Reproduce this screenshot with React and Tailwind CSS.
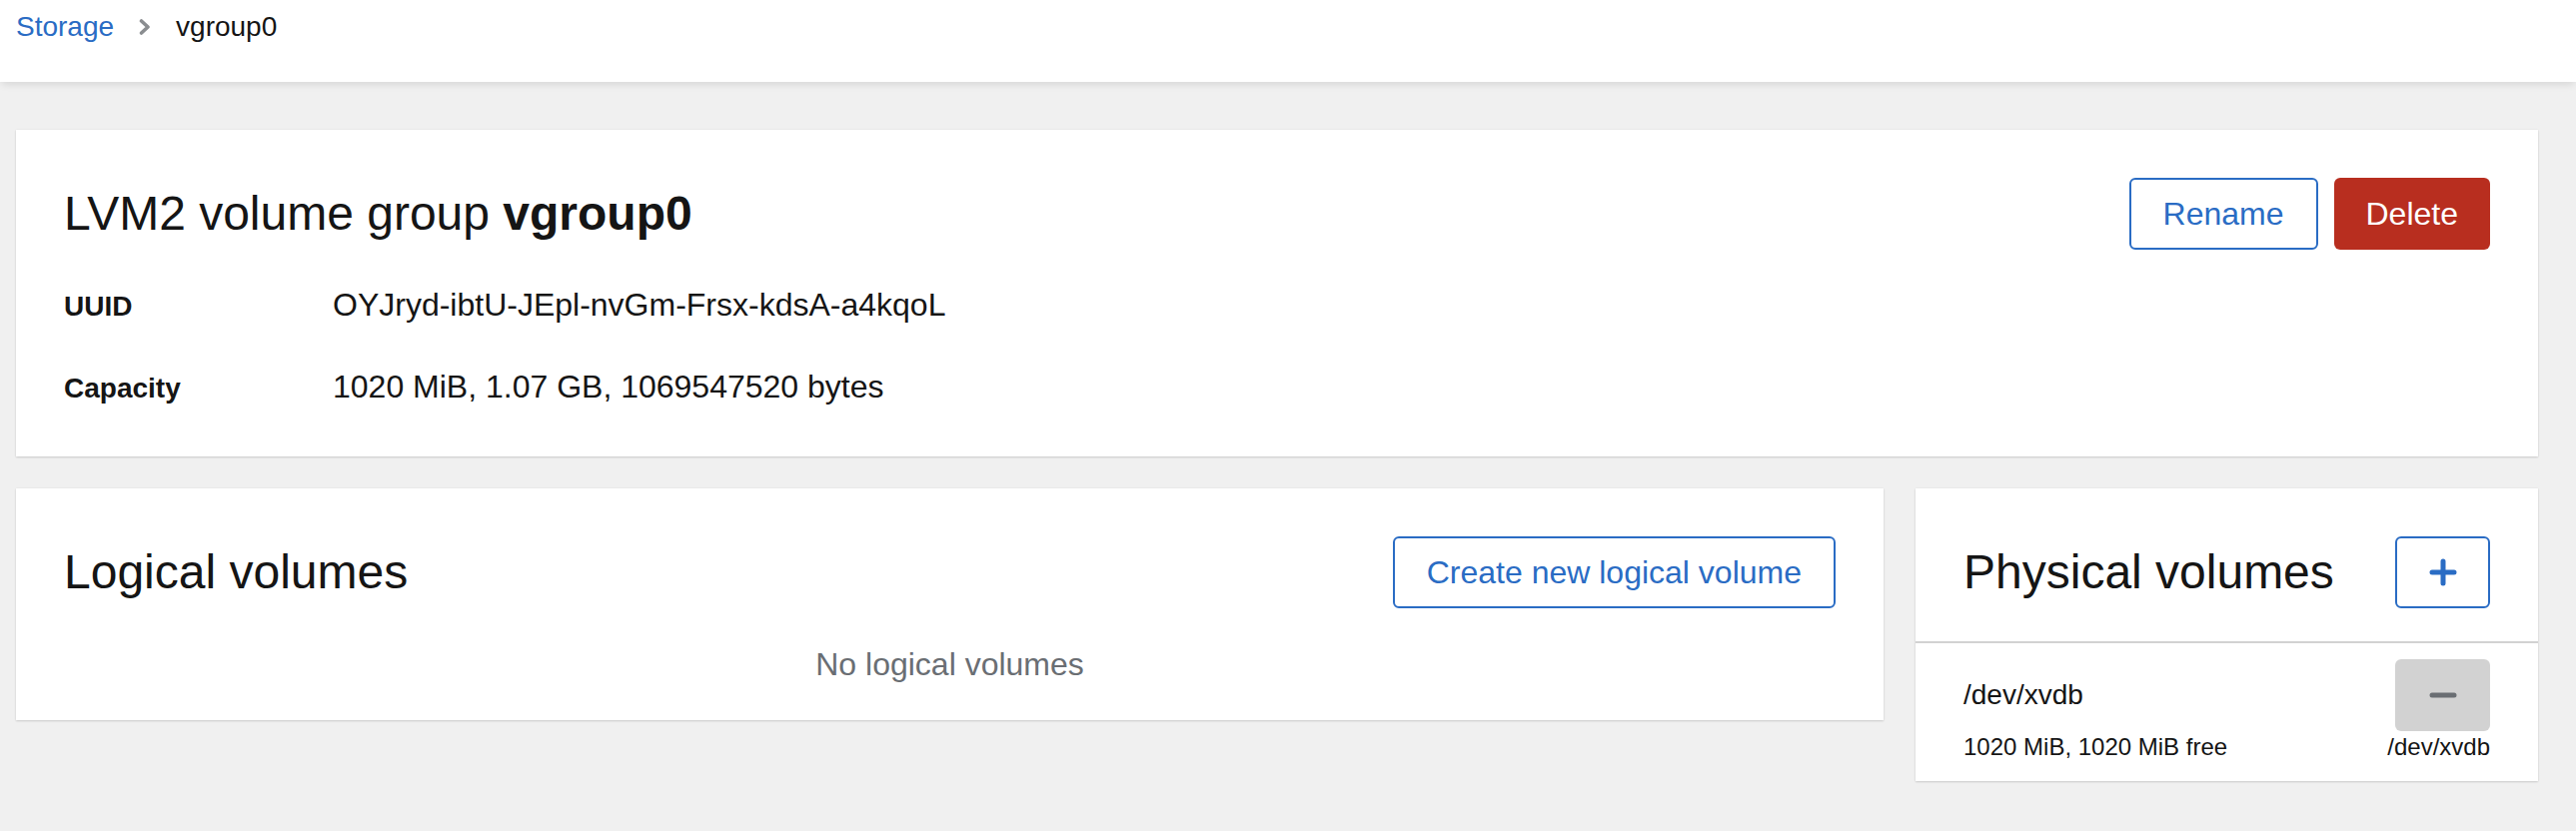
export default function App() {
  const font = { fontFamily: '"Liberation Sans", Arial, sans-serif' };
  return (
    <div className="min-h-[832px] bg-[#f0f0f0] text-[#151515]" style={font}>
      <header className="relative z-10 h-[82px] bg-white pl-4 pt-[7px] shadow-[0_4px_8px_-2px_rgba(3,3,3,0.12)]">
        <nav className="flex items-center text-[28px] leading-[40px]">
          <a className="text-[#2a6cc4]">Storage</a>
          <svg className="mx-[25px] h-[16px] w-[12px]" viewBox="0 0 12 16" fill="none">
            <path d="M2.5 2 L9 8 L2.5 14" stroke="#8a8d90" strokeWidth="3.6" strokeLinejoin="round" strokeLinecap="round" />
          </svg>
          <span>vgroup0</span>
        </nav>
      </header>

      <main className="flex flex-col gap-8 pl-4 pr-[38px] pt-12">
        <section className="bg-white px-12 pb-[48px] pt-12 shadow-[0_1px_2px_rgba(3,3,3,0.14),0_0_2px_rgba(3,3,3,0.06)]">
          <div className="flex h-[72px] items-center justify-between">
            <h1 className="text-[48px] leading-[60px]">
              LVM2 volume group <b className="font-bold">vgroup0</b>
            </h1>
            <div className="flex gap-4">
              <button className="h-[72px] rounded-[6px] border-2 border-[#2a6cc4] px-8 text-[32px] text-[#2a6cc4]">Rename</button>
              <button className="h-[72px] rounded-[6px] bg-[#b82e1f] px-8 text-[32px] text-white">Delete</button>
            </div>
          </div>
          <dl className="mt-[35px] grid grid-cols-[269px_1fr] items-baseline gap-y-10">
            <dt className="text-[28px] font-bold leading-[40px]">UUID</dt>
            <dd className="text-[32px] leading-[40px]">OYJryd-ibtU-JEpl-nvGm-Frsx-kdsA-a4kqoL</dd>
            <dt className="text-[28px] font-bold leading-[40px]">Capacity</dt>
            <dd className="text-[32px] leading-[40px]">1020 MiB, 1.07 GB, 1069547520 bytes</dd>
          </dl>
        </section>

        <div className="grid grid-cols-[1fr_623px] items-start gap-8">
          <section className="bg-white px-12 pb-9 pt-12 shadow-[0_1px_2px_rgba(3,3,3,0.14),0_0_2px_rgba(3,3,3,0.06)]">
            <div className="flex h-[72px] items-center justify-between">
              <h2 className="text-[48px] leading-[60px]">Logical volumes</h2>
              <button className="h-[72px] rounded-[6px] border-2 border-[#2a6cc4] px-8 text-[32px] text-[#2a6cc4]">
                Create new logical volume
              </button>
            </div>
            <p className="mt-9 text-center text-[32px] leading-[40px] text-[#6a6e73]">No logical volumes</p>
          </section>

          <section className="bg-white shadow-[0_1px_2px_rgba(3,3,3,0.14),0_0_2px_rgba(3,3,3,0.06)]">
            <div className="flex h-[155px] items-start justify-between border-b-2 border-[#d2d2d2] px-12 pt-12">
              <div className="flex h-[72px] w-full items-center justify-between">
                <h2 className="text-[48px] leading-[60px]">Physical volumes</h2>
                <button className="flex h-[72px] w-[95px] items-center justify-center rounded-[6px] border-2 border-[#2a6cc4]">
                  <svg width="28" height="28" viewBox="0 0 28 28">
                    <path d="M14 3 V25 M3 14 H25" stroke="#2a6cc4" strokeWidth="5" strokeLinecap="round" />
                  </svg>
                </button>
              </div>
            </div>
            <div className="grid grid-cols-[1fr_auto] items-center px-12 pb-[18px] pt-4">
              <span className="text-[28px] leading-[40px]">/dev/xvdb</span>
              <button className="flex h-[72px] w-[95px] items-center justify-center justify-self-end rounded-[6px] bg-[#d2d2d2]">
                <svg width="28" height="8" viewBox="0 0 28 8">
                  <path d="M3 4 H25" stroke="#6a6e73" strokeWidth="5" strokeLinecap="round" />
                </svg>
              </button>
              <span className="text-[24px] leading-[32px]">1020 MiB, 1020 MiB free</span>
              <span className="text-right text-[24px] leading-[32px]">/dev/xvdb</span>
            </div>
          </section>
        </div>
      </main>
    </div>
  );
}
